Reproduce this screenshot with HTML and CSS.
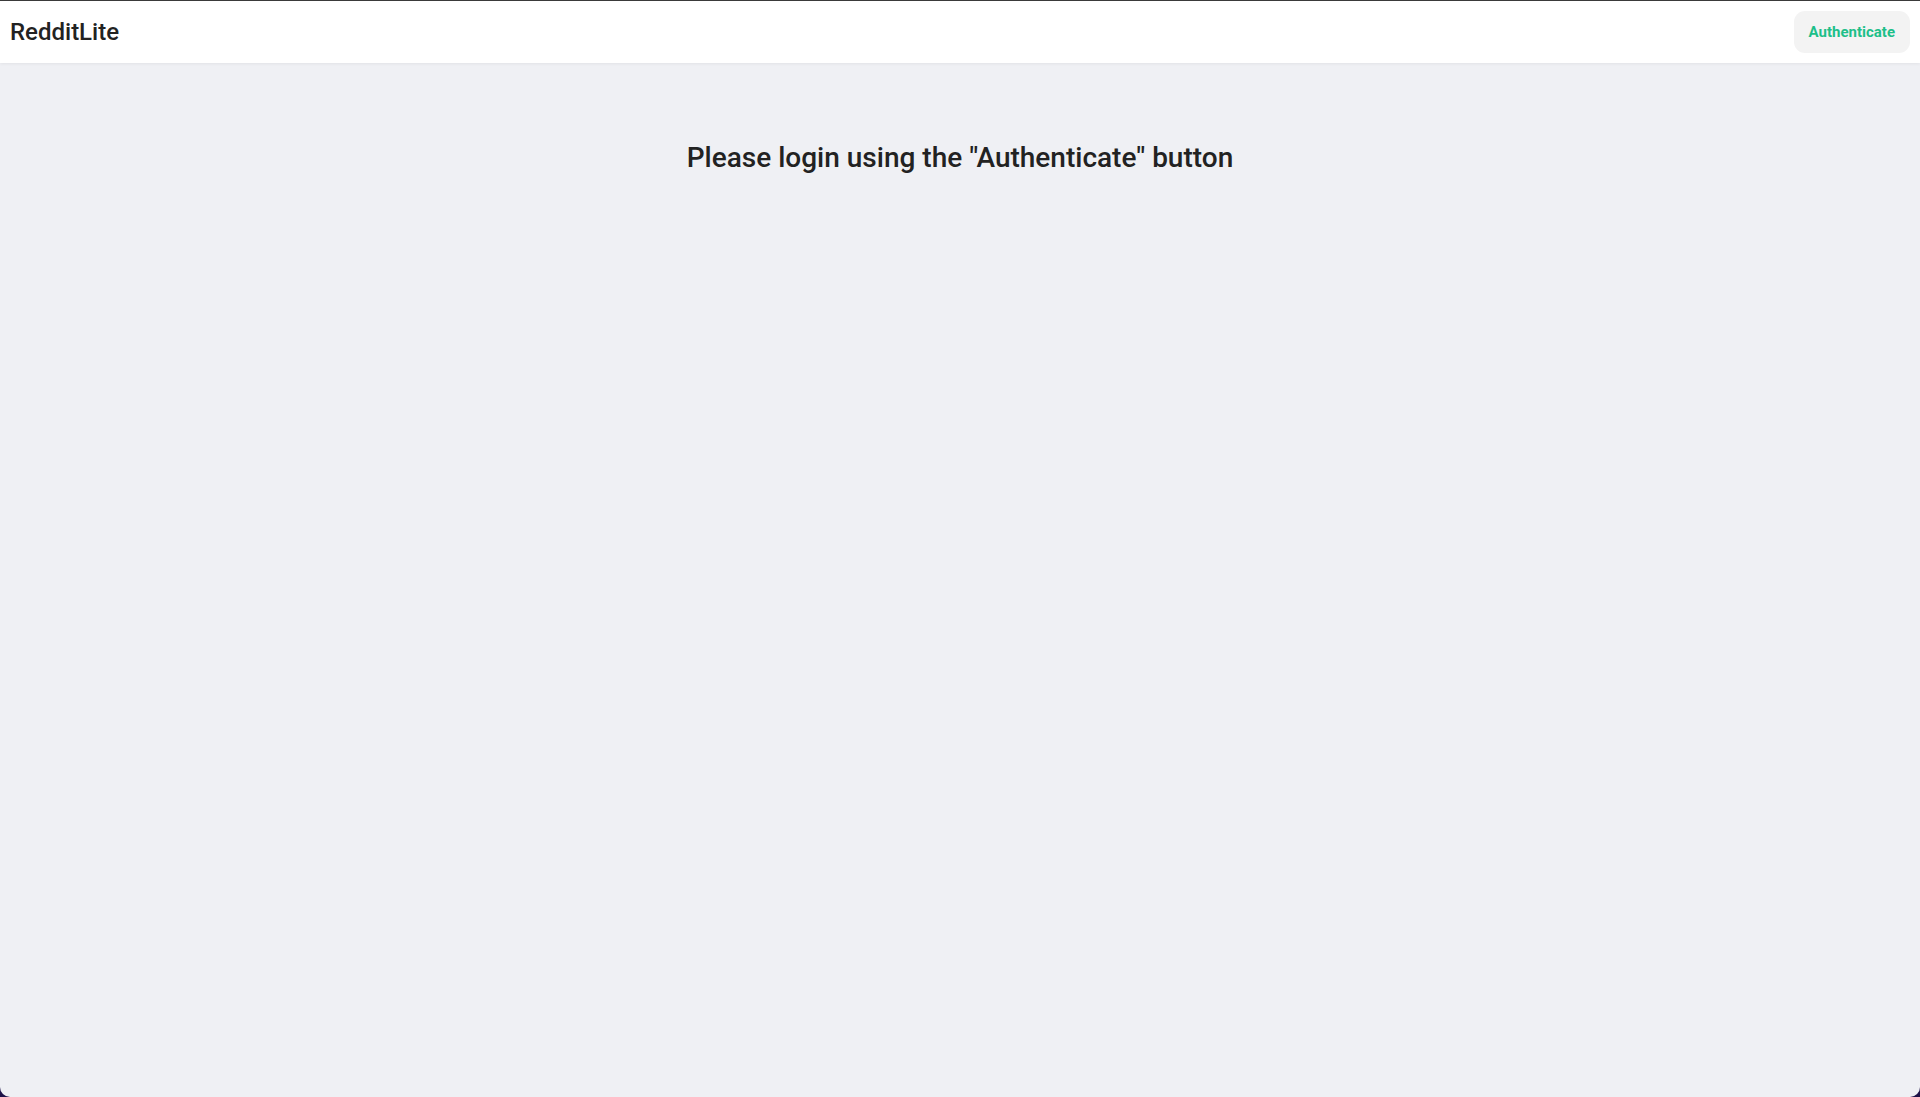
FILE: index.html
```html
<!DOCTYPE html>
<html lang="en">
<head>
<meta charset="utf-8">
<title>RedditLite</title>
<link rel="stylesheet" href="styles.css">
</head>
<body>
<div class="app">
  <header class="topbar">
    <h1 class="brand">RedditLite</h1>
    <button class="auth-btn" type="button">Authenticate</button>
  </header>
  <main class="content">
    <h2 class="notice">Please login using the "Authenticate" button</h2>
  </main>
</div>
</body>
</html>
```

FILE: styles.css
```css
html, body {
  margin: 0;
  padding: 0;
  height: 100%;
}
body {
  background: #1e1248;
  font-family: Roboto, "Liberation Sans", Arial, sans-serif;
  color: #222;
}
.app {
  height: 100%;
  display: flex;
  flex-direction: column;
  background: #eff0f4;
  border-top: 1px solid #3a3a3a;
  box-sizing: border-box;
  border-radius: 0 0 10px 10px;
  overflow: hidden;
}
.topbar {
  height: 62px;
  flex: none;
  display: flex;
  align-items: center;
  justify-content: space-between;
  padding: 0 10px;
  background: #fff;
  box-shadow: 0 1px 3px rgba(0,0,0,0.06);
  position: relative;
}
.brand {
  margin: 0;
  font-size: 24px;
  font-weight: 500;
  color: #222;
  letter-spacing: 0;
}
.auth-btn {
  font-family: inherit;
  font-size: 15px;
  font-weight: 700;
  color: #1dbf89;
  background: #f3f3f3;
  border: none;
  border-radius: 11px;
  height: 42px;
  padding: 0 15px;
  margin-top: 0;
}
.content {
  flex: 1;
  padding-top: 78px;
}
.notice {
  margin: 0;
  text-align: center;
  font-size: 28px;
  font-weight: 500;
  color: #222;
}
```
